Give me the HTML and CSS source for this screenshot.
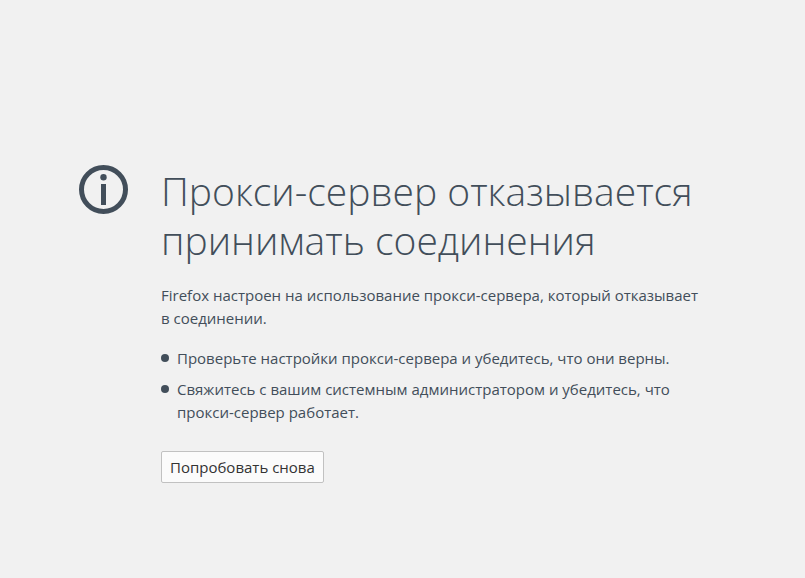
FILE: index.html
```
<!DOCTYPE html>
<html lang="ru">
<head>
    <meta charset="UTF-8">
    <meta name="viewport" content="width=device-width, initial-scale=1.0">
    <title>Проблема при загрузке страницы</title>
    <link rel="stylesheet" href="styles.css">
</head>
<body>

    <main class="container">
        <svg class="info-icon" viewBox="0 0 50 50" aria-hidden="true">
            <circle cx="25.5" cy="24.5" r="22" fill="none" stroke="#424e5a" stroke-width="5"/>
            <circle cx="25.5" cy="12.3" r="3.2" fill="#424e5a"/>
            <rect x="23" y="19" width="5" height="21" fill="#424e5a"/>
        </svg>

        <div class="content">
            <h1>Прокси-сервер отказывается принимать соединения</h1>

            <p>Firefox настроен на использование прокси-сервера, который отказывает в&nbsp;соединении.</p>

            <ul>
                <li>Проверьте настройки прокси-сервера и убедитесь, что они верны.</li>
                <li>Свяжитесь с вашим системным администратором и убедитесь, что прокси-сервер работает.</li>
            </ul>

            <button type="button" class="try-again">Попробовать снова</button>
        </div>
    </main>

</body>
</html>
```
FILE: styles.css
```
* {
    margin: 0;
    padding: 0;
    box-sizing: border-box;
}

body {
    font-family: "Open Sans", "Noto Sans", sans-serif;
    font-size: 15px;
    line-height: 23px;
    background-color: #f1f1f1;
    color: #424e5a;
    display: flex;
    justify-content: center;
    align-items: center;
    min-height: 100vh;
    padding: 0 78px;
}

.container {
    display: flex;
    align-items: flex-start;
    gap: 33px;
    width: 100%;
    max-width: 650px;
    padding-top: 69px;
}

.info-icon {
    flex: none;
    width: 50px;
    height: 50px;
}

.content {
    flex: 1;
}

h1 {
    font-size: 39px;
    font-weight: 300;
    line-height: 49px;
    padding-top: 1px;
    margin-bottom: 20px;
}

p {
    margin-bottom: 17px;
}

ul {
    list-style: none;
    margin-bottom: 27px;
}

li {
    position: relative;
    padding-left: 16px;
    margin-bottom: 8px;
}

li::before {
    content: "";
    position: absolute;
    left: 0;
    top: 7px;
    width: 8px;
    height: 8px;
    border-radius: 50%;
    background-color: #424e5a;
}

.try-again {
    font: inherit;
    color: #333;
    height: 32px;
    padding: 2px 8px 0;
    background-color: #fbfbfb;
    border: 1px solid #c1c1c1;
    border-radius: 2px;
}
```
